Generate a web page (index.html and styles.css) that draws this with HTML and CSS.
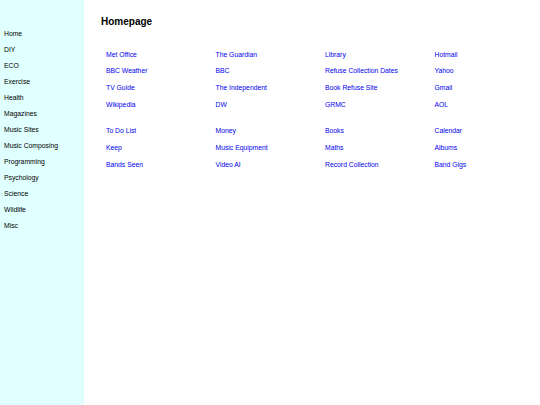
FILE: index.html
```html
<!DOCTYPE html>
<html>
<head>
<meta charset="utf-8">
<title>Homepage</title>
<link rel="stylesheet" href="styles.css">
</head>
<body>
<div class="page">
  <nav class="sidebar">
    <a href="#">Home</a>
    <a href="#">DIY</a>
    <a href="#">ECO</a>
    <a href="#">Exercise</a>
    <a href="#">Health</a>
    <a href="#">Magazines</a>
    <a href="#">Music Sites</a>
    <a href="#">Music Composing</a>
    <a href="#">Programming</a>
    <a href="#">Psychology</a>
    <a href="#">Science</a>
    <a href="#">Wildlife</a>
    <a href="#">Misc</a>
  </nav>
  <main class="main">
    <h1 class="title">Homepage</h1>
    <div class="links">
      <a href="#">Met Office</a>
      <a href="#">The Guardian</a>
      <a href="#">Library</a>
      <a href="#">Hotmail</a>
      <a href="#">BBC Weather</a>
      <a href="#">BBC</a>
      <a href="#">Refuse Collection Dates</a>
      <a href="#">Yahoo</a>
      <a href="#">TV Guide</a>
      <a href="#">The Independent</a>
      <a href="#">Book Refuse Site</a>
      <a href="#">Gmail</a>
      <a href="#">Wikipedia</a>
      <a href="#">DW</a>
      <a href="#">GRMC</a>
      <a href="#">AOL</a>
    </div>
    <div class="links second">
      <a href="#">To Do List</a>
      <a href="#">Money</a>
      <a href="#">Books</a>
      <a href="#">Calendar</a>
      <a href="#">Keep</a>
      <a href="#">Music Equipment</a>
      <a href="#">Maths</a>
      <a href="#">Albums</a>
      <a href="#">Bands Seen</a>
      <a href="#">Video AI</a>
      <a href="#">Record Collection</a>
      <a href="#">Band Gigs</a>
    </div>
  </main>
</div>
</body>
</html>
```
FILE: styles.css
```css
html, body {
  margin: 0;
  padding: 0;
  background: #ffffff;
  font-family: "Liberation Sans", Arial, sans-serif;
  overflow: hidden;
}
.page {
  display: flex;
  min-height: 405px;
}
.sidebar {
  width: 84px;
  flex: none;
  background: #e0ffff;
  padding: 26px 0 0 4px;
  box-sizing: border-box;
  display: flex;
  flex-direction: column;
}
.sidebar a {
  font-size: 6.8px;
  line-height: 16px;
  color: #000000;
  text-decoration: none;
  white-space: nowrap;
}
.main {
  flex: 1;
  padding: 16px 0 0 17px;
  min-width: 0;
}
.title {
  margin: 0;
  font-size: 10px;
  line-height: 12px;
  font-weight: bold;
  color: #000000;
}
.links {
  display: grid;
  grid-template-columns: repeat(4, 109.5px);
  grid-auto-rows: 16.67px;
  margin: 18.7px 0 0 5px;
}
.links.second {
  margin-top: 10px;
}
.links a {
  font-size: 6.8px;
  line-height: 16.67px;
  color: #0000ee;
  text-decoration: none;
  white-space: nowrap;
}
```
